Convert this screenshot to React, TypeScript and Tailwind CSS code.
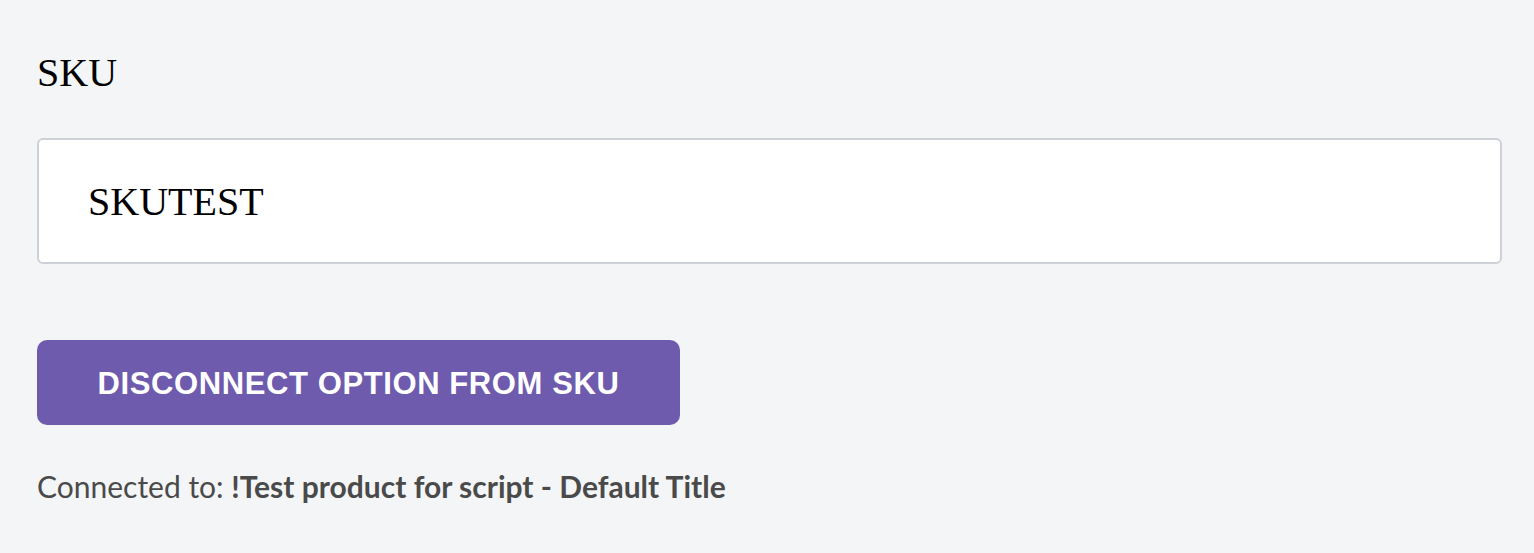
import React from 'react';

export default function App() {
  return (
    <div className="min-h-[553px] bg-[#f4f5f7] px-[37px] pt-[50px]">
      <label htmlFor="sku-input" className="block font-['Liberation_Serif',serif] text-[40px] leading-[46px] text-black">
        SKU
      </label>
      <input
        id="sku-input"
        type="text"
        defaultValue="SKUTEST"
        className="mt-[42px] block h-[126px] w-[1465px] rounded-[6px] border-2 border-[#cdd0d6] bg-white pl-[49px] font-['Liberation_Serif',serif] text-[40px] text-black outline-none"
      />
      <button
        type="button"
        className="mt-[76px] block h-[85px] w-[643px] rounded-[10px] bg-[#6e5bad] pt-[3px] font-['Liberation_Sans',sans-serif] text-[31px] font-bold uppercase tracking-[0.6px] text-white"
      >
        Disconnect option from SKU
      </button>
      <p className="mt-[43px] font-['Lato',sans-serif] text-[30px] leading-[1.2] text-[#4a4a4a]">
        Connected to: <span className="font-bold">!Test product for script - Default Title</span>
      </p>
    </div>
  );
}
